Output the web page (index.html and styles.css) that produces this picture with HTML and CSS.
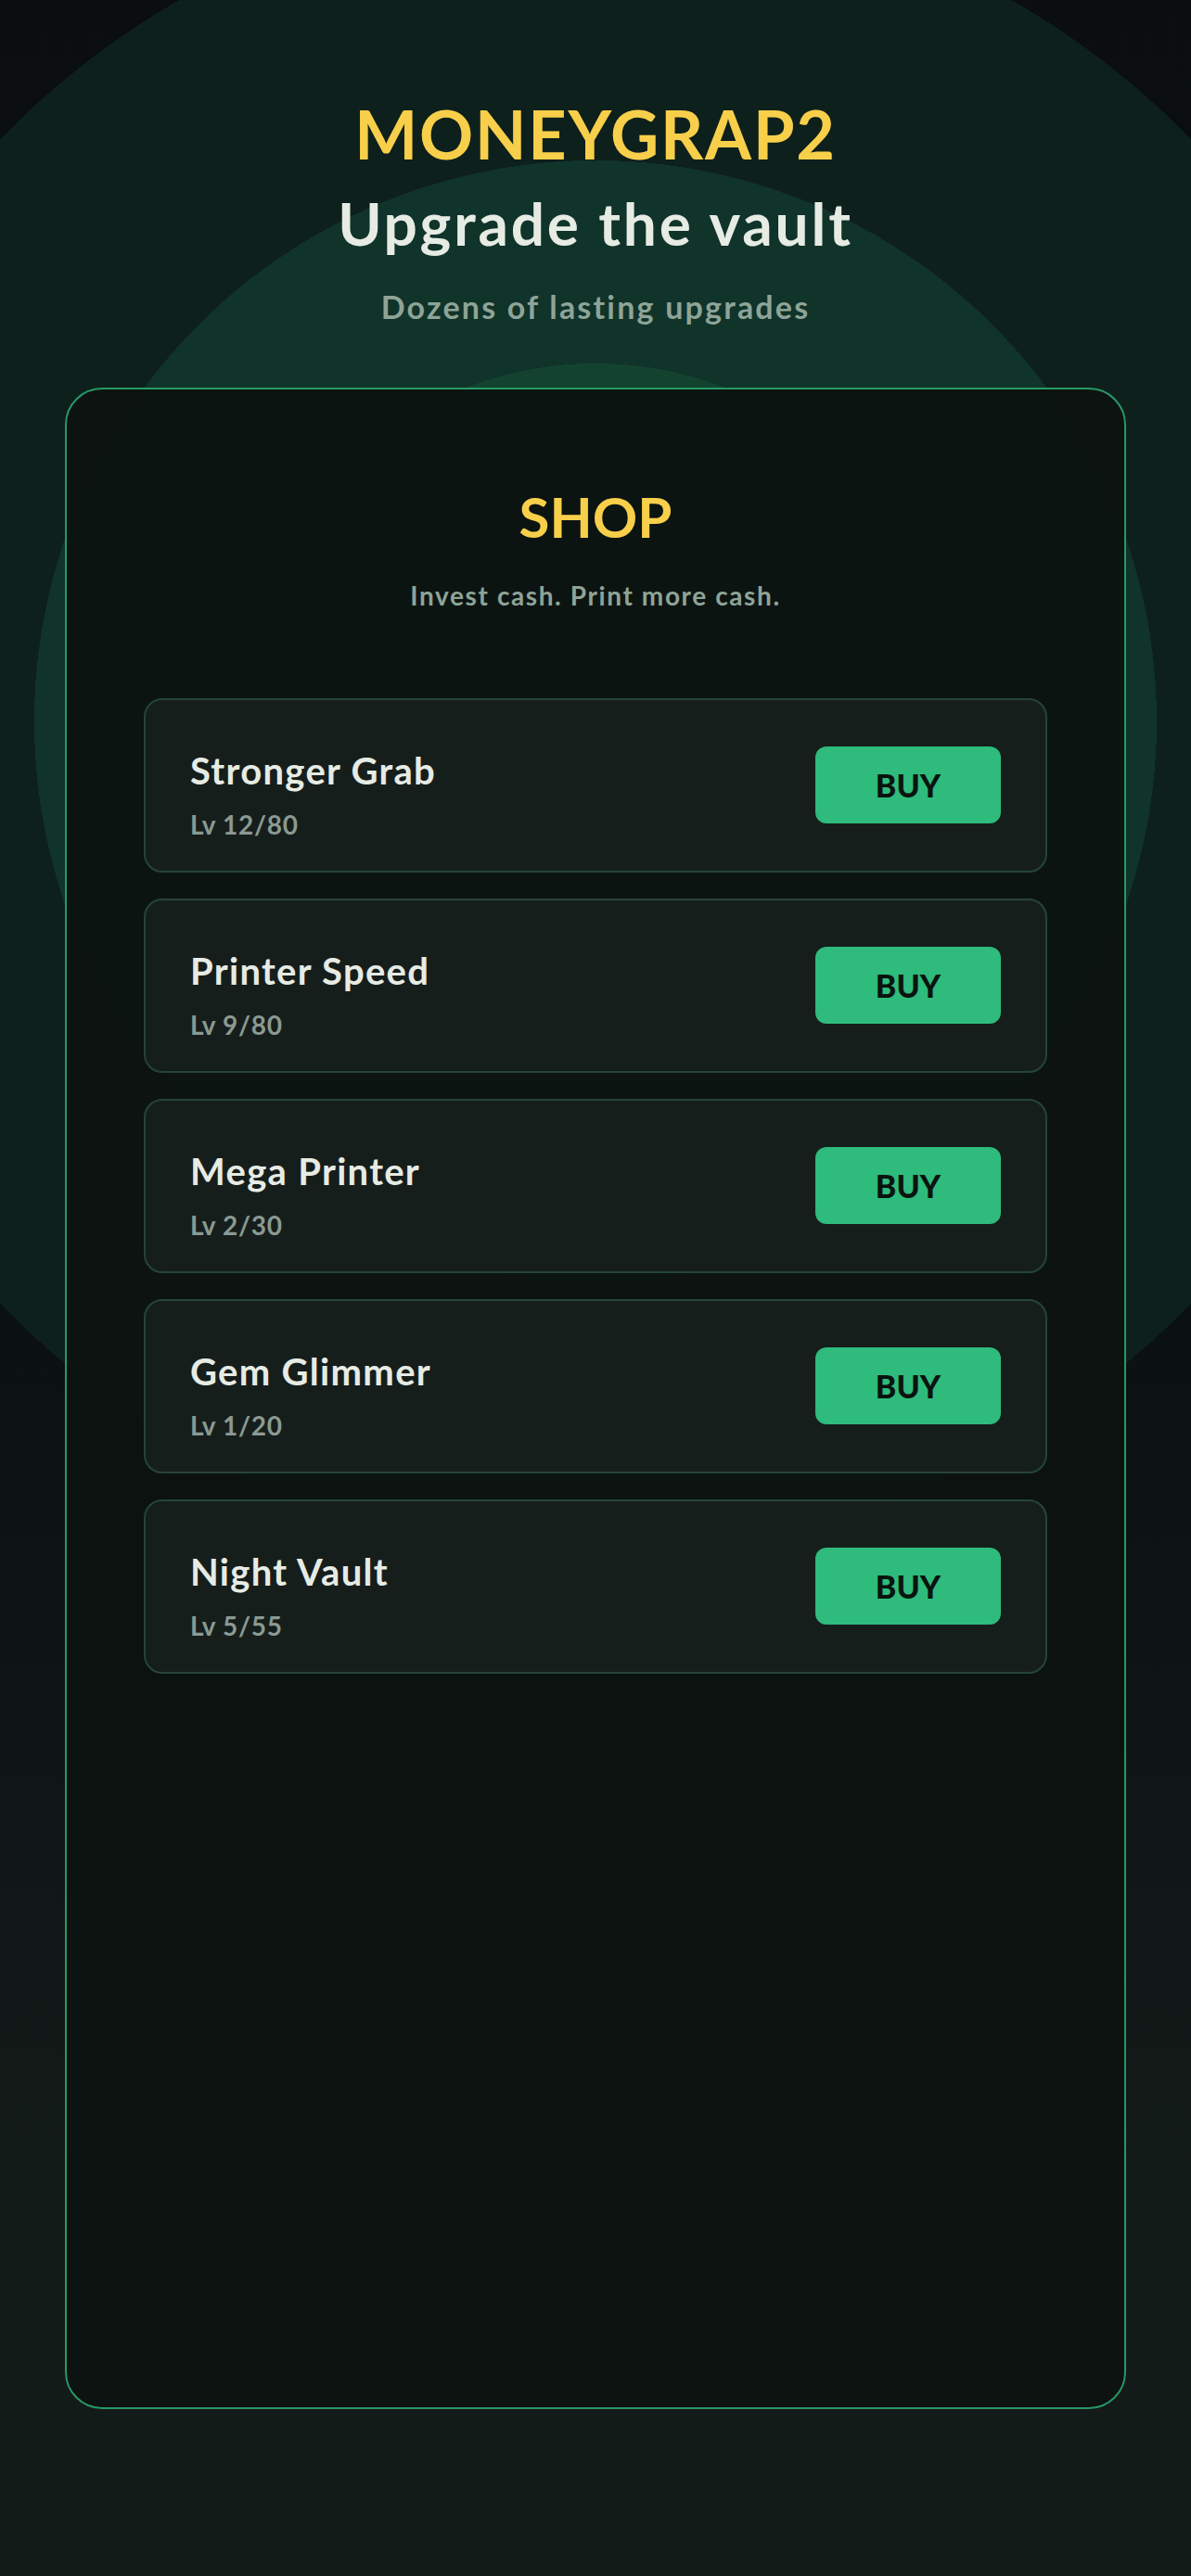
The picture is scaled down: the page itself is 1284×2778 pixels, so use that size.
FILE: index.html
```html
<!DOCTYPE html>
<html lang="en">
<head>
  <meta charset="UTF-8" />
  <meta name="viewport" content="width=device-width, initial-scale=1" />
  <title>MONEYGRAP2 - Shop</title>
  <link rel="stylesheet" href="styles.css">
</head>
<body>
  <header class="hero">
    <h1 class="brand">MONEYGRAP2</h1>
    <h2 class="headline">Upgrade the vault</h2>
    <p class="tagline">Dozens of lasting upgrades</p>
  </header>

  <main class="shop">
    <h3>SHOP</h3>
    <p class="subline">Invest cash. Print more cash.</p>

    <ul class="upgrades">
      <li class="upgrade">
        <div class="info">
          <span class="name">Stronger Grab</span>
          <span class="level">Lv 12/80</span>
        </div>
        <button type="button">BUY</button>
      </li>
      <li class="upgrade">
        <div class="info">
          <span class="name">Printer Speed</span>
          <span class="level">Lv 9/80</span>
        </div>
        <button type="button">BUY</button>
      </li>
      <li class="upgrade">
        <div class="info">
          <span class="name">Mega Printer</span>
          <span class="level">Lv 2/30</span>
        </div>
        <button type="button">BUY</button>
      </li>
      <li class="upgrade">
        <div class="info">
          <span class="name">Gem Glimmer</span>
          <span class="level">Lv 1/20</span>
        </div>
        <button type="button">BUY</button>
      </li>
      <li class="upgrade">
        <div class="info">
          <span class="name">Night Vault</span>
          <span class="level">Lv 5/55</span>
        </div>
        <button type="button">BUY</button>
      </li>
    </ul>
  </main>
</body>
</html>
```

FILE: styles.css
```css
:root {
  --gold: #f8cf4a;
  --light: #e6ebe4;
  --muted: #8ea497;
  --green: #2ebb7c;
  --edge: #279866;
}
body {
  margin: 0;
  min-height: 2778px;
  font-family: Lato, "Noto Sans", sans-serif;
  color: var(--light);
  background:
    radial-gradient(circle at 642px 778px, #13432f 0 386px, #10332a 386px 605px, #0e201c 605px 898px, transparent 898px),
    linear-gradient(180deg, #0a0e11 0%, #0b1012 50%, #131b19 85%, #131b19 100%);
  background-repeat: no-repeat;
}
.hero {
  text-align: center;
  padding-top: 101px;
}
.brand {
  margin: 0;
  font-size: 72px;
  line-height: 1.2;
  font-weight: 700;
  letter-spacing: 1.8px;
  color: var(--gold);
}
.headline {
  margin: 16px 0 0;
  font-size: 64px;
  line-height: 1.2;
  font-weight: 700;
  letter-spacing: 2.8px;
  color: var(--light);
}
.tagline {
  margin: 31px 0 0;
  font-size: 34px;
  line-height: 1.2;
  font-weight: 700;
  letter-spacing: 2.2px;
  color: var(--muted);
}
.shop {
  box-sizing: border-box;
  height: 2180px;
  margin: 66px 70px 0;
  padding: 101px 83px 0;
  border: 2px solid var(--edge);
  border-radius: 40px;
  background: rgba(13, 19, 17, 0.96);
}
.shop h3 {
  margin: 0;
  text-align: center;
  font-size: 60px;
  line-height: 1.2;
  font-weight: 700;
  color: var(--gold);
}
.subline {
  margin: 33px 0 0;
  text-align: center;
  font-size: 28px;
  line-height: 1.2;
  font-weight: 700;
  letter-spacing: 1.6px;
  color: var(--muted);
}
.upgrades {
  list-style: none;
  margin: 93px 0 0;
  padding: 0;
  display: flex;
  flex-direction: column;
  gap: 28px;
}
.upgrade {
  box-sizing: border-box;
  height: 188px;
  padding: 0 48px;
  display: flex;
  align-items: center;
  justify-content: space-between;
  border: 2px solid #25443a;
  border-radius: 20px;
  background: #161e1c;
}
.info {
  display: flex;
  flex-direction: column;
  margin-top: 20px;
}
.name {
  font-size: 40px;
  line-height: 1.2;
  font-weight: 700;
  letter-spacing: 1.3px;
  color: var(--light);
}
.level {
  margin-top: 18px;
  font-size: 28px;
  line-height: 1.2;
  font-weight: 700;
  letter-spacing: 0.7px;
  color: #8a9a92;
}
button {
  width: 200px;
  height: 83px;
  border: none;
  border-radius: 12px;
  background: var(--green);
  color: #0b130f;
  font-family: Lato, "Noto Sans", sans-serif;
  font-size: 34px;
  font-weight: 900;
  cursor: pointer;
}
```
